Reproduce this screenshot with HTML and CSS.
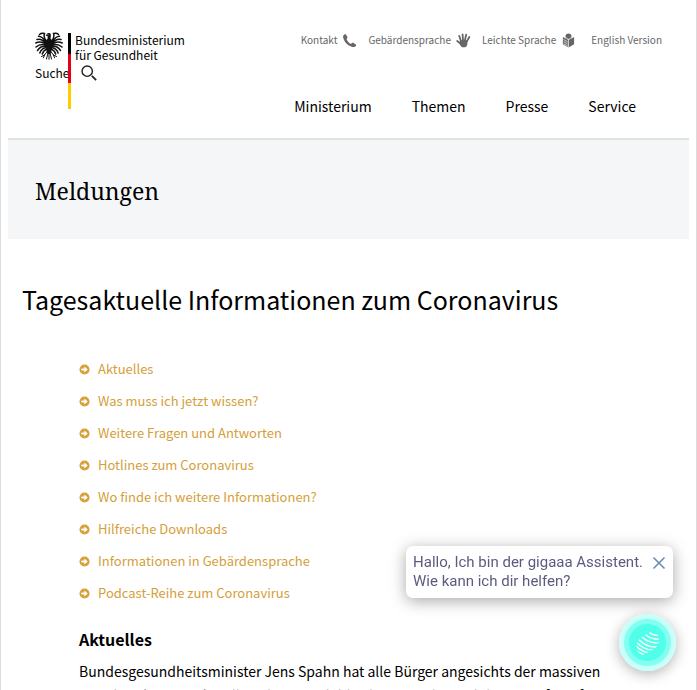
FILE: index.html
```html
<!DOCTYPE html>
<html lang="de">
<head>
<meta charset="utf-8">
<meta name="viewport" content="width=device-width, initial-scale=1">
<title>Tagesaktuelle Informationen zum Coronavirus</title>
<link rel="stylesheet" href="styles.css">
</head>
<body>
<svg class="sprite" aria-hidden="true">
  <symbol id="arrow" viewBox="0 0 12 12">
    <circle cx="6" cy="6" r="5.5" fill="currentColor"/>
    <path d="M2.6 5h3.2V2.8L9.6 6 5.8 9.2V7H2.6z" fill="#fff"/>
  </symbol>
</svg>
<div class="page">
  <header class="header">
    <div class="brand">
      <a class="logo" href="#">
        <svg class="eagle" viewBox="0 0 28 28" aria-hidden="true">
          <g fill="none" stroke="#111" stroke-linecap="round">
            <path stroke-width="1.5" d="M11.500 9.500C9.500 7 8.500 4 9.500 1.500C7 1 5.500 1.500 4.500 2.500M11 10C8.500 6.500 6 4 3.500 4.200M11 11C8 8 5 6.500 2 7.500M11 12C7.500 9.800 4 9.500 .8 11M11 13.200C7.500 12 4 12.500 1 15M11 14.500C8 14 4.500 15.500 2.500 18.500M11.500 15.500C8.800 15.800 6 17.800 4.800 21M12 17C10 17.800 8 19.500 7.300 22"/>
            <path stroke-width="1.5" d="M16.500 9.500C18.500 7 19.500 4 18.500 1.500C21 1 22.500 1.500 23.500 2.500M17 10C19.500 6.500 22 4 24.500 4.200M17 11C20 8 23 6.500 26 7.500M17 12C20.500 9.800 24 9.500 27.200 11M17 13.200C20.500 12 24 12.500 27 15M17 14.500C20 14 23.500 15.500 25.500 18.500M16.500 15.500C19.200 15.800 22 17.800 23.200 21M16 17C18 17.800 20 19.500 20.700 22"/>
            <path stroke-width="1" d="M12.500 19L9.500 23 6.500 24.500M9.500 23L8.500 25.800M15.500 19L18.500 23 21.500 24.500M18.500 23L19.500 25.800M14 20V27.300M13 21L11.500 27M15 21L16.500 27"/>
          </g>
          <path d="M10.500 3.800L12.300 1.600C14.500.4 16.300 1.500 15.800 4L15.500 6.500 18 9.500 17.500 15 15.500 22H12.500L10.500 15 10 9.500 12.700 6.500 12.500 4z" fill="#111"/>
          <circle cx="13" cy="2.800" r=".5" fill="#fff"/>
        </svg>
        <span class="logo-name">Bundesministerium<br>für Gesundheit</span>
        <span class="flag" aria-hidden="true"></span>
      </a>
      <a class="search" href="#"><span>Suche</span>
        <svg class="search-icon" viewBox="0 0 18 18" aria-hidden="true"><g fill="none" stroke="#222"><circle cx="7" cy="7" r="5.800" stroke-width="1.600"/><path d="M12.200 12.200L17 17" stroke-width="2"/></g></svg>
      </a>
    </div>
    <div class="navs">
      <nav class="meta" aria-label="Servicenavigation">
        <a href="#">Kontakt
          <svg class="meta-icon" viewBox="0 0 16 16"><path fill="currentColor" d="M2.800 1.200C1 2.200.8 4 1.600 6.200 3 10.200 6.200 13.500 10.300 14.700 12.500 15.300 14.200 14.800 15 13.200L14.800 12.300 11.900 10.300 10.900 10.500 9.500 11.700C7.600 10.700 5.700 8.600 4.900 6.600L5.800 5 5.700 4 3.800 1.300z"/></svg></a>
        <a href="#">Gebärdensprache
          <svg class="meta-icon" viewBox="0 0 16 16"><g fill="none" stroke="currentColor" stroke-linecap="round" stroke-width="1.900"><path d="M5.500 9L3.400 3M7.500 8L7 1.500M9.500 8L10.800 1.800M11 10L14.200 4.300M5 11.500L1.300 8.600"/></g><path fill="currentColor" d="M4.600 7.500L12.200 7.800 12 12.500C11.500 14.500 10 15.500 8 15.300 6 15.200 4.500 14 3.500 10.300z"/></svg></a>
        <a href="#">Leichte Sprache
          <svg class="meta-icon" viewBox="0 0 16 16"><circle cx="8" cy="3.800" r="3.200" fill="currentColor"/><path fill="currentColor" d="M2 4.300L8 7.500 14 4.300V12L8 15.500 2 12z"/><path fill="none" stroke="#fff" stroke-width=".7" d="M4.800 4.800L8 6.800 11.200 4.800M8 7V15.500M2.800 7L7.200 9.500M2.800 9.200L7.200 11.700M2.800 11.400L7.200 13.900"/></svg></a>
        <a class="english" href="#">English Version</a>
      </nav>
      <nav class="main-nav" aria-label="Hauptnavigation">
        <a href="#">Ministerium</a>
        <a href="#">Themen</a>
        <a href="#">Presse</a>
        <a href="#">Service</a>
      </nav>
    </div>
  </header>
  <div class="section-band">Meldungen</div>
  <main>
    <h1>Tagesaktuelle Informationen zum Coronavirus</h1>
    <div class="content">
      <ul class="toc">
        <li><svg><use href="#arrow"/></svg><a href="#aktuelles">Aktuelles</a></li>
        <li><svg><use href="#arrow"/></svg><a href="#">Was muss ich jetzt wissen?</a></li>
        <li><svg><use href="#arrow"/></svg><a href="#">Weitere Fragen und Antworten</a></li>
        <li><svg><use href="#arrow"/></svg><a href="#">Hotlines zum Coronavirus</a></li>
        <li><svg><use href="#arrow"/></svg><a href="#">Wo finde ich weitere Informationen?</a></li>
        <li><svg><use href="#arrow"/></svg><a href="#">Hilfreiche Downloads</a></li>
        <li><svg><use href="#arrow"/></svg><a href="#">Informationen in Gebärdensprache</a></li>
        <li><svg><use href="#arrow"/></svg><a href="#">Podcast-Reihe zum Coronavirus</a></li>
      </ul>
      <h2 id="aktuelles">Aktuelles</h2>
      <p>Bundesgesundheitsminister Jens Spahn hat alle Bürger angesichts der massiven Einschränkungen aktuell noch um Geduld gebeten und zu Solidarität aufgerufen.</p>
    </div>
  </main>
</div>
<aside class="assistant">
  <div class="bubble">
    <p>Hallo, Ich bin der gigaaa Assistent.<br>Wie kann ich dir helfen?</p>
    <button class="close" type="button" aria-label="Schließen"><svg viewBox="0 0 14 14"><path d="M1.500 1.500L12.500 12.500M12.500 1.500L1.500 12.500" fill="none" stroke="#6689b0" stroke-width="1.500"/></svg></button>
  </div>
  <button class="chat" type="button" aria-label="Assistent öffnen">
    <svg viewBox="0 0 24 24">
      <clipPath id="shell"><path d="M13 2C17-1 23 2 22.500 7 24 12 22 16 17 18.500L7 24C2 23 0 18 1 13 2 8 7 5 13 2z"/></clipPath>
      <g clip-path="url(#shell)" fill="none" stroke="#fff" stroke-width="1.500"><path d="M13 1Q17 5 24 4M9 3Q15 9 24 8M5 5Q13 13 24 12M2 8Q11 17 22 16M0 11Q9 20 19 19M0 15Q7 22 15 22M0 19Q5 24 11 24"/></g>
    </svg>
  </button>
</aside>
</body>
</html>
```

FILE: styles.css
```css
* { box-sizing: border-box; }

body {
  margin: 0;
  height: 100vh;
  overflow: hidden;
  background: #fff;
  color: #000;
  font: 14px/24px "Noto Sans CJK SC", "Open Sans", sans-serif;
}

a { color: inherit; text-decoration: none; }
h1, h2, p, ul { margin: 0; padding: 0; }
button { padding: 0; border: 0; cursor: pointer; }
svg { display: block; flex: none; }
.sprite { position: absolute; width: 0; height: 0; }

.page {
  min-height: 100vh;
  padding: 0 7px;
  border: solid #dcdcdc;
  border-width: 0 1px;
}

.header {
  display: flex;
  justify-content: space-between;
  height: 140px;
  padding: 32px 27px 0;
  border-bottom: 2px solid #dfe3e2;
}

.logo { position: relative; display: flex; gap: 12px; }
.eagle { width: 28px; height: 28px; }
.logo-name { font-size: 12px; line-height: 15px; }
.flag {
  position: absolute;
  z-index: 1;
  top: 1px;
  left: 33px;
  width: 3px;
  height: 76px;
  background: linear-gradient(#000 0 21px, #e2001a 21px 50px, #fc0 50px);
}
.search { display: flex; align-items: center; gap: 11px; font-size: 12px; line-height: 22px; }
.search-icon { width: 16px; height: 16px; }

.meta { display: flex; justify-content: flex-end; gap: 11px; font-size: 10px; line-height: 16px; color: #666; }
.meta a { display: flex; align-items: center; gap: 5px; }
.meta .english { margin-left: 4px; }
.meta-icon { width: 15px; height: 15px; }

.main-nav { display: flex; justify-content: flex-end; gap: 40px; padding-top: 46px; padding-right: 26px; }

.section-band {
  padding: 34px 27px 30px;
  background: #f4f6f8;
  font: 23px/35px "Noto Serif", "Liberation Serif", serif;
}

main { padding: 42px 14px 0; }
h1 { font-size: 25px; line-height: 36px; font-weight: 400; }
.content { padding: 36px 56px 0 57px; }
.toc { list-style: none; color: #d4a03a; font-size: 13px; line-height: 32px; }
.toc li { display: flex; align-items: center; gap: 8px; }
.toc svg { width: 11px; height: 11px; }
h2 { margin-top: 17px; font-size: 16px; line-height: 26px; font-weight: 700; }
.content p { margin-top: 7px; }

.assistant {
  position: fixed;
  right: 21px;
  bottom: 19px;
  display: flex;
  flex-direction: column;
  align-items: flex-end;
  gap: 16px;
  color: #5b5b80;
  font: 15px/19px Roboto, sans-serif;
}
.bubble {
  display: flex;
  align-items: flex-start;
  gap: 9px;
  margin-right: 3px;
  padding: 7px;
  border-radius: 7px;
  background: #fff;
  box-shadow: 0 3px 16px rgba(0, 0, 0, .35);
}
.close { margin-top: 3px; background: none; }
.close svg { width: 14px; height: 14px; }
.chat {
  display: grid;
  place-items: center;
  width: 57px;
  height: 57px;
  border-radius: 50%;
  background: radial-gradient(circle closest-side, #4fffea 0 18px, #83fff1 19px 23px, #c8fff8 24px);
  box-shadow: 0 3px 14px rgba(0, 0, 0, .3);
}
.chat svg { width: 24px; height: 24px; }
```
